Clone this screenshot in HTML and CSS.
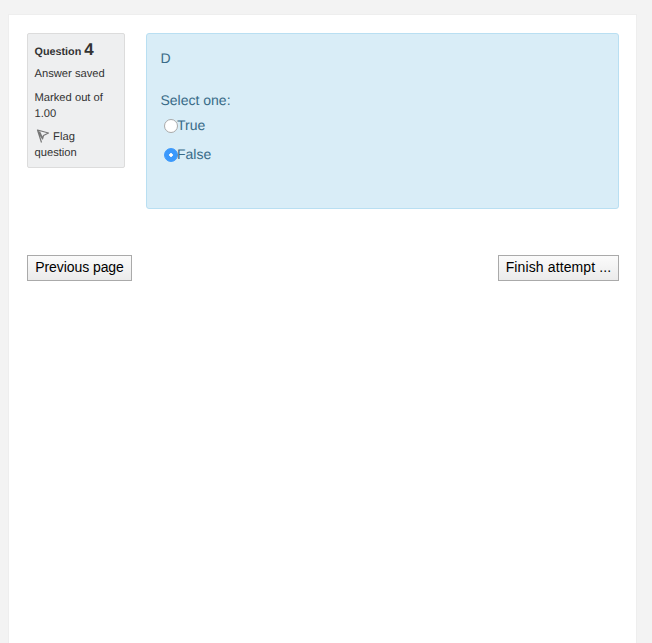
FILE: index.html
```html
<!DOCTYPE html>
<html lang="en">
<head>
    <meta charset="UTF-8">
    <meta name="viewport" content="width=device-width, initial-scale=1.0">
    <title>Quiz attempt</title>
    <link rel="stylesheet" href="styles.css">
</head>
<body>
    <div class="page">
        <div class="question">
            <!-- Datos de la pregunta -->
            <div class="info">
                <h3 class="info-title">Question <span class="info-number">4</span></h3>
                <div class="info-line">Answer saved</div>
                <div class="info-line">Marked out of 1.00</div>
                <div class="info-flag">
                    <svg class="flag-icon" width="14" height="14" viewBox="0 0 14 14">
                        <path d="M1.5 1 L12.5 4 L7.5 6.5 L6.5 10 Z M1.5 1 L5.5 13.5 M3.5 2.5 L6.5 9" fill="none" stroke="#777" stroke-width="1.2" stroke-linejoin="round"/>
                    </svg>
                    Flag question
                </div>
            </div>

            <!-- Contenido de la pregunta -->
            <div class="content">
                <p class="content-text">D</p>
                <p class="prompt">Select one:</p>
                <label class="answer"><input type="radio" name="q4">True</label>
                <label class="answer"><input type="radio" name="q4" checked>False</label>
            </div>
        </div>

        <div class="nav">
            <button class="nav-button nav-previous">Previous page</button>
            <button class="nav-button nav-finish">Finish attempt ...</button>
        </div>
    </div>
</body>
</html>
```

FILE: styles.css
```css
html, body {
  height: 100%;
}
body {
  margin: 0;
  padding: 14px 15px 0 8px;
  box-sizing: border-box;
  overflow: hidden;
  background-color: #f3f3f3;
  font-family: "Liberation Sans", Arial, sans-serif;
  text-rendering: geometricPrecision;
  color: #333;
}
/*Panel blanco*/
.page {
  height: 629px;
  padding: 18px 17px 18px 18px;
  box-sizing: border-box;
  background-color: #fff;
  border: 1px solid #eee;
  border-bottom: none;
}
.question {
  display: flex;
  align-items: flex-start;
  gap: 21px;
}
/*Caja de informacion*/
.info {
  width: 98px;
  height: 135px;
  padding: 7px 7px 0 6.5px;
  box-sizing: border-box;
  flex-shrink: 0;
  background-color: #eeeff0;
  border: 1px solid #dcdcdc;
  border-radius: 2px;
  font-size: 11.2px;
  line-height: 16px;
}
.info-title {
  margin: 0 0 5px;
  font-size: 10.8px;
  font-weight: bold;
  line-height: 18px;
}
.info-number {
  font-size: 17px;
}
.info-line {
  margin-bottom: 8px;
}
.info-flag {
  margin-top: -1px;
}
.flag-icon {
  vertical-align: -3px;
  margin-left: 1.5px;
}
/*Caja de la pregunta*/
.content {
  width: 473px;
  height: 176px;
  padding: 16px 14px 0 13.5px;
  box-sizing: border-box;
  background-color: #d9edf7;
  border: 1px solid #b9dff2;
  border-radius: 3px;
  font-size: 14px;
  line-height: 17px;
  color: #386b88;
}
.content-text {
  margin: 0 0 25px;
}
.prompt {
  margin: 0 0 2px;
}
.answer {
  display: flex;
  align-items: center;
  height: 29px;
  padding-left: 3.5px;
}
.answer input {
  appearance: none;
  width: 14px;
  height: 14px;
  margin: 0 -1px 0 0;
  flex-shrink: 0;
  background-color: #fff;
  border: 1px solid #a9a9a9;
  border-radius: 50%;
}
.answer input:checked {
  background: radial-gradient(circle, #fff 0 1.5px, #3b99fc 2px);
  border-color: #3b99fc;
}
/*Botones*/
.nav {
  display: flex;
  justify-content: space-between;
  margin-top: 46px;
}
.nav-button {
  height: 26px;
  padding: 0 0 2px;
  background: linear-gradient(#fbfbfb, #ebebeb);
  border: 1px solid #aaa;
  border-radius: 0;
  font-family: "Liberation Sans", Arial, sans-serif;
  font-size: 14px;
  color: #000;
}
.nav-previous {
  width: 105px;
  letter-spacing: -0.07px;
}
.nav-finish {
  width: 121px;
  letter-spacing: 0.12px;
}
```
